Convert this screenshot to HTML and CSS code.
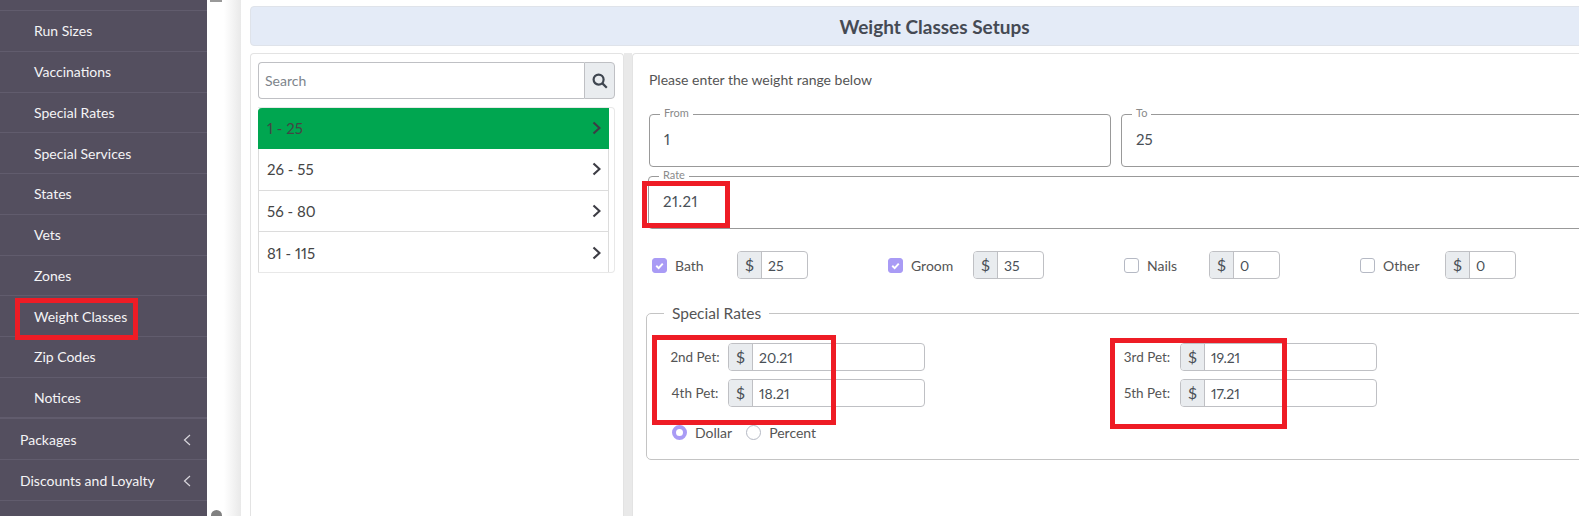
FILE: index.html
```html
<!DOCTYPE html>
<html lang="en">
<head>
  <meta charset="UTF-8" />
  <title>Weight Classes Setups</title>
  <link rel="stylesheet" href="styles.css">
</head>
<body>
<div class="app">
  <nav class="sidebar">
    <ul class="submenu">
      <li>Run Sizes</li>
      <li>Vaccinations</li>
      <li>Special Rates</li>
      <li>Special Services</li>
      <li>States</li>
      <li>Vets</li>
      <li>Zones</li>
      <li>Weight Classes</li>
      <li>Zip Codes</li>
      <li>Notices</li>
    </ul>
    <ul class="menu">
      <li>Packages <svg class="caret" viewBox="0 0 8 12"><path d="M7 1 1.5 6 7 11"/></svg></li>
      <li>Discounts and Loyalty <svg class="caret" viewBox="0 0 8 12"><path d="M7 1 1.5 6 7 11"/></svg></li>
    </ul>
  </nav>

  <div class="gutter">
    <div class="thumb-top"></div>
    <div class="thumb-bottom"></div>
  </div>

  <main class="content">
    <h1 class="page-title">Weight Classes Setups</h1>

    <div class="panels">
      <section class="list-panel">
        <div class="search">
          <input type="text" placeholder="Search">
          <button type="button" aria-label="Search">
            <svg viewBox="0 0 16 16"><circle cx="6.6" cy="6.6" r="5"/><path d="m10.4 10.4 4.4 4.4"/></svg>
          </button>
        </div>
        <ul class="classes">
          <li class="active">1 - 25 <svg viewBox="0 0 9 14"><path d="m1.5 1.5 6 5.5-6 5.5"/></svg></li>
          <li>26 - 55 <svg viewBox="0 0 9 14"><path d="m1.5 1.5 6 5.5-6 5.5"/></svg></li>
          <li>56 - 80 <svg viewBox="0 0 9 14"><path d="m1.5 1.5 6 5.5-6 5.5"/></svg></li>
          <li>81 - 115 <svg viewBox="0 0 9 14"><path d="m1.5 1.5 6 5.5-6 5.5"/></svg></li>
        </ul>
      </section>

      <div class="splitter"></div>

      <section class="form-panel">
        <p class="hint">Please enter the weight range below</p>

        <div class="range">
          <fieldset class="box box-from">
            <legend>From</legend>
            <input type="text" value="1">
          </fieldset>
          <fieldset class="box box-to">
            <legend>To</legend>
            <input type="text" value="25">
          </fieldset>
        </div>
        <fieldset class="box box-rate">
          <legend>Rate</legend>
          <input type="text" value="21.21">
        </fieldset>

        <div class="services">
          <div class="service">
            <span class="check on"><svg viewBox="0 0 12 12"><path d="m3 6.2 2.2 2.2L9 4.2"/></svg></span>
            <span class="service-name">Bath</span>
            <div class="money"><span>$</span><input type="text" value="25"></div>
          </div>
          <div class="service">
            <span class="check on"><svg viewBox="0 0 12 12"><path d="m3 6.2 2.2 2.2L9 4.2"/></svg></span>
            <span class="service-name">Groom</span>
            <div class="money"><span>$</span><input type="text" value="35"></div>
          </div>
          <div class="service">
            <span class="check"></span>
            <span class="service-name">Nails</span>
            <div class="money"><span>$</span><input type="text" value="0"></div>
          </div>
          <div class="service">
            <span class="check"></span>
            <span class="service-name">Other</span>
            <div class="money"><span>$</span><input type="text" value="0"></div>
          </div>
        </div>

        <fieldset class="special">
          <legend>Special Rates</legend>
          <div class="pets">
            <div class="pet"><label>2nd Pet:</label><div class="money"><span>$</span><input type="text" value="20.21"></div></div>
            <div class="pet"><label>3rd Pet:</label><div class="money"><span>$</span><input type="text" value="19.21"></div></div>
            <div class="pet"><label>4th Pet:</label><div class="money"><span>$</span><input type="text" value="18.21"></div></div>
            <div class="pet"><label>5th Pet:</label><div class="money"><span>$</span><input type="text" value="17.21"></div></div>
          </div>
          <div class="radios">
            <span class="radio on"></span><span class="radio-name radio-first">Dollar</span>
            <span class="radio"></span><span class="radio-name">Percent</span>
          </div>
        </fieldset>
      </section>
    </div>
  </main>

  <div class="mark mark-nav"></div>
  <div class="mark mark-rate"></div>
  <div class="mark mark-left"></div>
  <div class="mark mark-right"></div>
</div>
</body>
</html>
```

FILE: styles.css
```css
html, body {
  margin: 0;
  padding: 0;
  background: #fff;
}
body {
  font-family: 'Lato', 'Noto Sans', sans-serif;
  font-size: 14px;
  color: #495057;
  font-variant-numeric: proportional-nums;
}
ul {
  list-style: none;
  margin: 0;
  padding: 0;
}
input {
  font-family: inherit;
  font-variant-numeric: inherit;
  color: #495057;
  border: none;
  outline: none;
  background: transparent;
  padding: 0;
  min-width: 0;
}
.app {
  position: relative;
  display: flex;
  width: 1579px;
  height: 516px;
  overflow: hidden;
}

/* sidebar */
.sidebar {
  flex: none;
  width: 207px;
  background: #544f5f;
  color: #f4f4f6;
  padding-top: 10px;
  box-sizing: border-box;
}
.submenu {
  border-top: 1px solid #615c6d;
}
.submenu li {
  height: 40.75px;
  box-sizing: border-box;
  display: flex;
  align-items: center;
  padding: 0 0 0 34px;
  border-bottom: 1px solid #615c6d;
}
.submenu li:last-child {
  border-bottom: 2px solid #615c6d;
  height: 41px;
  padding-top: 1px;
}
.menu li {
  height: 41px;
  box-sizing: border-box;
  display: flex;
  align-items: center;
  justify-content: space-between;
  padding: 2px 16px 0 20px;
  border-bottom: 1px solid #615c6d;
}
.caret {
  width: 8px;
  height: 12px;
  fill: none;
  stroke: #d8d6dc;
  stroke-width: 1.2;
}

/* strip next to the sidebar */
.gutter {
  flex: none;
  width: 34px;
  display: flex;
  flex-direction: column;
  justify-content: space-between;
  background: linear-gradient(to right, #fff 50%, #e9e9e9 100%);
}
.thumb-top {
  width: 12px;
  height: 2px;
  margin-left: 3px;
  background: #999;
}
.thumb-bottom {
  width: 11px;
  height: 6px;
  margin-left: 4px;
  background: #808080;
  border-radius: 6px 6px 0 0;
}

/* main area */
.content {
  flex: none;
  width: 1500px;
  padding: 6px 0 0 9px;
  box-sizing: border-box;
}
.page-title {
  margin: 0;
  height: 40px;
  line-height: 39px;
  box-sizing: border-box;
  background: #e4ebf7;
  border: 1px solid #dfe3ea;
  border-radius: 4px;
  text-align: center;
  font-size: 19px;
  font-weight: 700;
  color: #454a54;
  padding-right: 122px;
}
.panels {
  display: flex;
  margin-top: 7px;
  height: 470px;
}
.list-panel {
  flex: none;
  width: 374px;
  box-sizing: border-box;
  border: 1px solid #e3e3e3;
  border-bottom: none;
  border-radius: 4px 4px 0 0;
  padding: 8px 8px 0 7px;
}
.splitter {
  flex: none;
  width: 8px;
  background: #e9e9e9;
}
.form-panel {
  flex: 1;
  box-sizing: border-box;
  border-top: 1px solid #e3e3e3;
  border-left: 1px solid #e3e3e3;
  border-radius: 4px 0 0 0;
  padding: 0 0 0 16px;
}

/* search and list */
.search {
  display: flex;
  height: 37px;
}
.search input {
  flex: 1;
  box-sizing: border-box;
  border: 1px solid #bfc0c4;
  border-right: none;
  border-radius: 4px 0 0 4px;
  padding: 0 6px;
  font-size: 14px;
}
.search input::placeholder {
  color: #7d848b;
}
.search button {
  flex: none;
  width: 31px;
  box-sizing: border-box;
  padding: 0;
  background: #e9ecef;
  border: 1px solid #bfc0c4;
  border-radius: 0 4px 4px 0;
  display: flex;
  align-items: center;
  justify-content: center;
}
.search svg {
  width: 16px;
  height: 16px;
  fill: none;
  stroke: #3f4650;
  stroke-width: 2.2;
}
.classes {
  margin-top: 8px;
  height: 166px;
  box-sizing: border-box;
  border: 1px solid #e8e8e8;
  border-left: none;
  border-radius: 0 4px 4px 0;
  padding-right: 5px;
  overflow: hidden;
}
.classes li {
  height: 41.5px;
  box-sizing: border-box;
  display: flex;
  align-items: center;
  justify-content: space-between;
  padding: 0 7px 0 8px;
  font-size: 15px;
  color: #454545;
  border-left: 1px solid #dcdcdc;
  border-right: 1px solid #dcdcdc;
  border-bottom: 1px solid #dcdcdc;
}
.classes li:last-child {
  border-bottom: none;
}
.classes li.active {
  height: 41px;
  background: #00a650;
  border-color: #00a650;
  border-radius: 4px 0 0 0;
}
.classes svg {
  width: 9px;
  height: 14px;
  fill: none;
  stroke: #3d3d45;
  stroke-width: 2.2;
}

/* form */
.hint {
  margin: 0;
  padding-top: 17px;
  line-height: 17px;
  font-size: 14px;
  color: #555;
}
.range {
  display: flex;
  gap: 10px;
  margin-top: 19px;
}
.box {
  margin: 0;
  padding: 0;
  box-sizing: border-box;
  height: 60px;
  border: 1px solid #999;
  border-radius: 4px;
}
.box legend {
  margin-left: 10px;
  padding: 0 4px 2px;
  font-size: 11px;
  line-height: 12px;
  color: #8a8a8a;
}
.box input {
  display: block;
  width: 100%;
  box-sizing: border-box;
  height: 36px;
  padding-left: 14px;
  font-size: 15px;
}
.box-from {
  flex: none;
  width: 462px;
}
.box-to {
  flex: 1;
}
.box-rate {
  margin: 2px 0 0 -1px;
}
.box-rate input {
  letter-spacing: 0.5px;
}
.services {
  display: grid;
  grid-template-columns: repeat(4, 236px);
  margin-top: 22px;
}
.service {
  display: flex;
  align-items: center;
  height: 28px;
  padding-left: 3px;
}
.check {
  flex: none;
  width: 15px;
  height: 15px;
  box-sizing: border-box;
  border: 1px solid #b5b9c4;
  border-radius: 3px;
  background: #fff;
}
.check.on {
  background: #a99bf5;
  border-color: #a99bf5;
}
.check svg {
  display: block;
  width: 13px;
  height: 13px;
  fill: none;
  stroke: #fff;
  stroke-width: 1.8;
}
.service-name {
  width: 62px;
  margin-left: 8px;
  font-size: 14px;
  color: #555;
}
.money {
  flex: none;
  display: flex;
  width: 71px;
  height: 28px;
  box-sizing: border-box;
  border: 1px solid #bfc0c4;
  border-radius: 4px;
  overflow: hidden;
}
.money span {
  flex: none;
  width: 24px;
  box-sizing: border-box;
  background: #e9ecef;
  border-right: 1px solid #bfc0c4;
  text-align: center;
  line-height: 26px;
  font-size: 16px;
}
.money input {
  flex: 1;
  width: 100%;
  padding-left: 6px;
  font-size: 14px;
}
.special {
  margin: 24px 0 0 -3px;
  padding: 0;
  height: 157px;
  box-sizing: border-box;
  border: 1px solid #c4c4c4;
  border-radius: 5px;
}
.special legend {
  margin-left: 17px;
  padding: 0 8px;
  font-size: 15.5px;
  line-height: 20px;
  color: #555;
}
.pets {
  display: grid;
  grid-template-columns: repeat(2, 452px);
  row-gap: 8px;
  margin: 20px 0 0 21px;
}
.pet {
  display: flex;
  align-items: center;
}
.pet label {
  flex: none;
  width: 54px;
  margin-right: 6px;
  text-align: center;
  font-size: 13.5px;
  color: #555;
  white-space: nowrap;
}
.pet .money {
  width: 197px;
}
.radios {
  display: flex;
  align-items: center;
  margin: 17px 0 0 25px;
}
.radio {
  flex: none;
  width: 15px;
  height: 15px;
  box-sizing: border-box;
  border: 1px solid #b5b9c4;
  border-radius: 50%;
}
.radio.on {
  border: 4.5px solid #a99bf5;
}
.radio-name {
  margin: 0 13px 0 8px;
  font-size: 14px;
  color: #555;
}
.radio-first {
  margin-right: 14px;
}

/* red annotation boxes drawn over the screenshot */
.mark {
  position: absolute;
  box-sizing: border-box;
  border: 5px solid #ee1c25;
}
.mark-nav {
  left: 15px;
  top: 298px;
  width: 123px;
  height: 42px;
}
.mark-rate {
  left: 642px;
  top: 181px;
  width: 88px;
  height: 47px;
}
.mark-left {
  left: 652px;
  top: 335px;
  width: 184px;
  height: 90px;
}
.mark-right {
  left: 1110px;
  top: 338px;
  width: 177px;
  height: 91px;
}
```
